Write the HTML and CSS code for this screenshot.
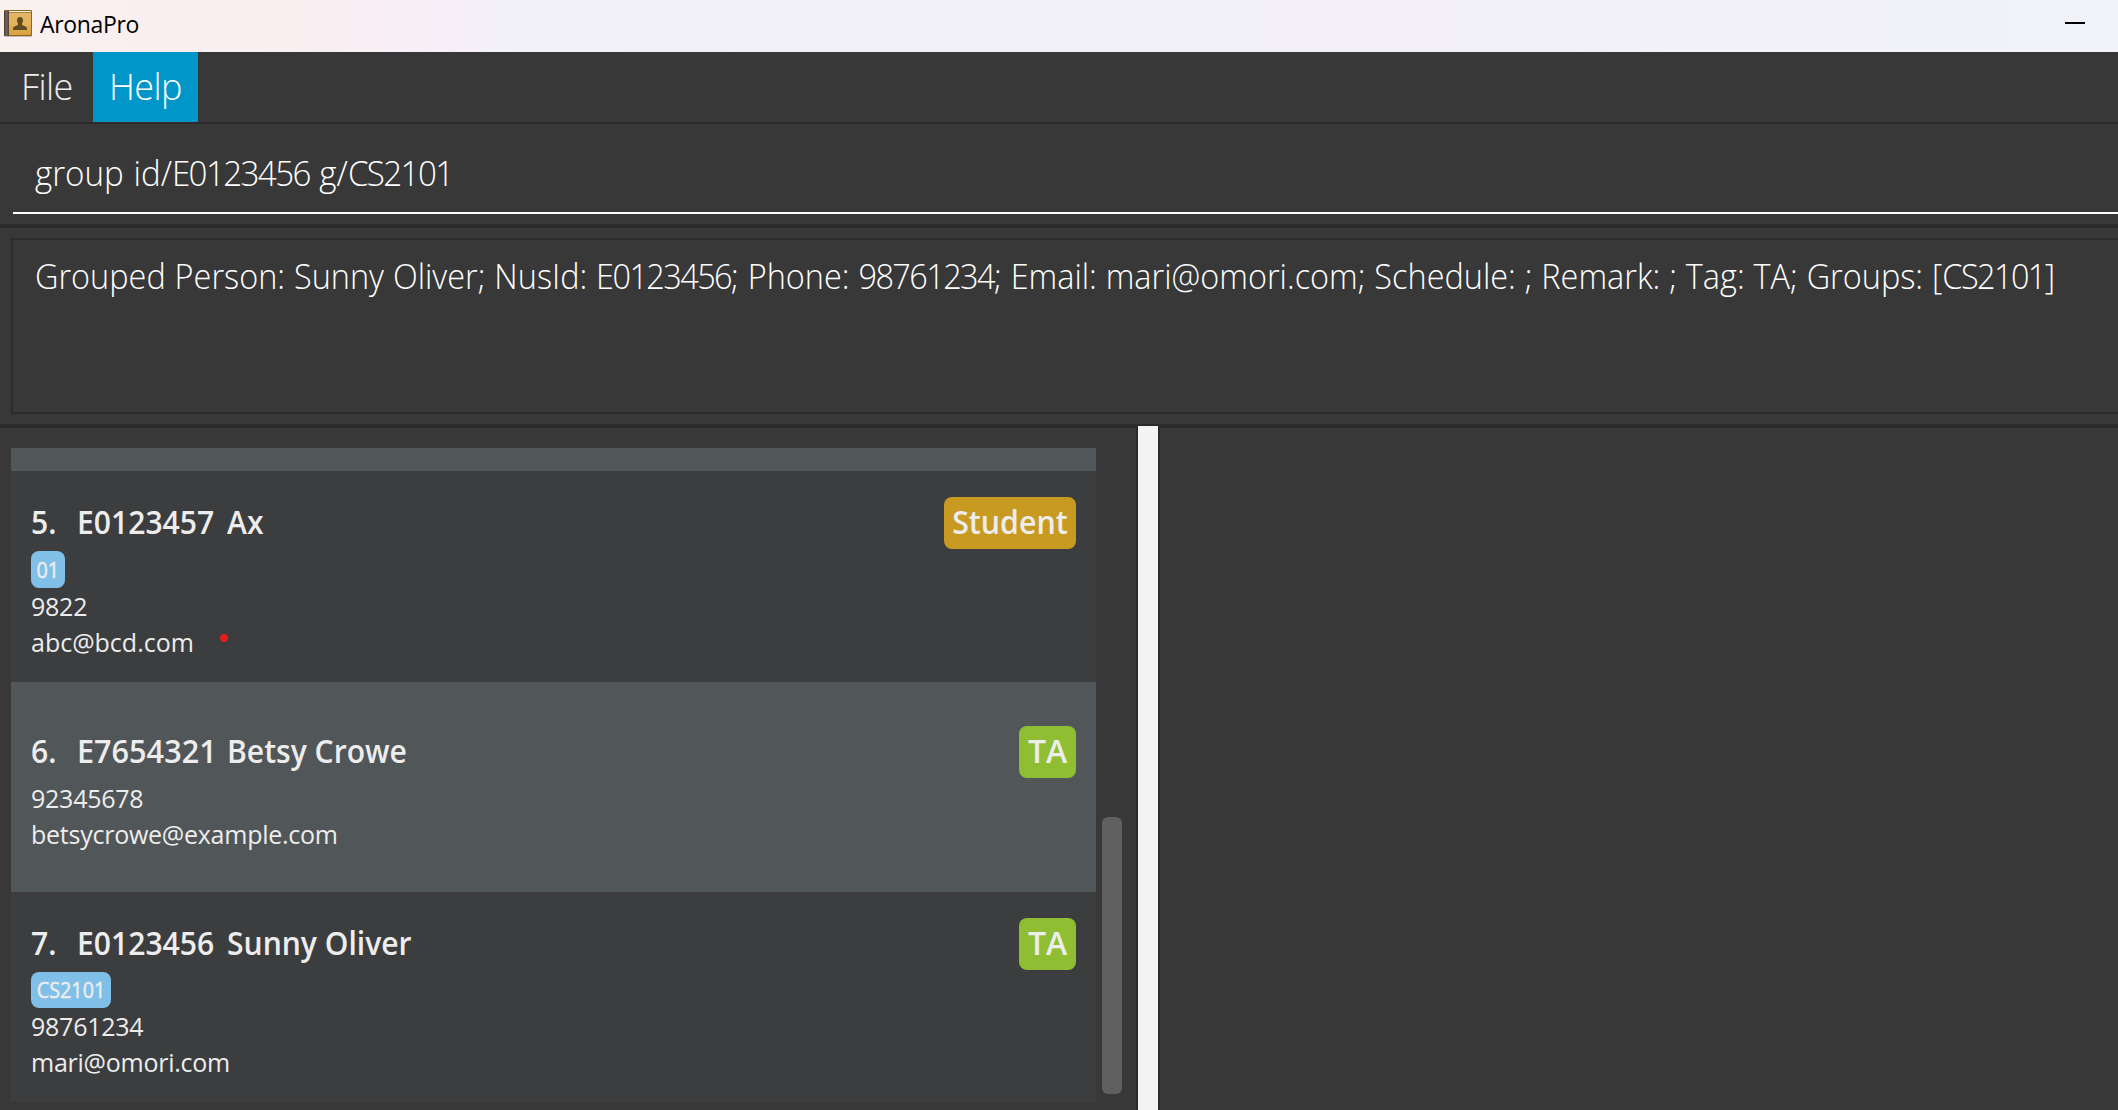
FILE: index.html
```html
<!DOCTYPE html>
<html lang="en">
<head>
<meta charset="utf-8">
<title>AronaPro</title>
<link rel="stylesheet" href="styles.css">
</head>
<body>
<div class="window">
  <header class="titlebar">
    <svg class="app-icon" width="30" height="30" viewBox="0 0 30 30">
      <defs>
        <linearGradient id="cover" x1="0" y1="0" x2="0" y2="1"><stop offset="0" stop-color="#e0b668"/><stop offset=".45" stop-color="#e3b45a"/><stop offset="1" stop-color="#d9a23d"/></linearGradient>
        <linearGradient id="spine" x1="0" y1="0" x2="1" y2="0"><stop offset="0" stop-color="#4a3a34"/><stop offset=".5" stop-color="#75645c"/><stop offset="1" stop-color="#51403a"/></linearGradient>
      </defs>
      <rect x="1.5" y="26" width="27.5" height="2" rx="1" fill="#000" opacity=".22"/>
      <rect x="1" y="1" width="28" height="26" rx="1" fill="#8e6420"/>
      <rect x="5" y="2" width="23" height="1.2" fill="#fff3d8"/>
      <rect x="6" y="4" width="22" height="22" fill="url(#cover)"/>
      <rect x="1" y="2" width="5" height="25" fill="url(#spine)"/>
      <path d="M17 8c2.100 0 3 1.400 3 3.200 0 1.500-.4 2.600-1 3.400v1.400c1.500.8 5 1.400 5 3.300v1.700H10v-1.700c0-1.900 3.500-2.500 5-3.300v-1.400c-.6-.8-1-1.900-1-3.400C14 9.400 14.900 8 17 8z" fill="#634b24"/>
    </svg>
    <span class="app-name">AronaPro</span>
    <span class="minimize"></span>
  </header>
  <nav class="menubar">
    <span class="menu menu-file">File</span>
    <span class="menu menu-help">Help</span>
  </nav>
  <section class="command">
    <div class="command-field"><span class="command-text">group id/<span class="code">E0123456</span> g/<span class="code">CS2101</span></span></div>
  </section>
  <section class="result">
    <div class="result-box"><span class="result-text">Grouped Person: Sunny Oliver; NusId: <span class="code">E0123456</span>; Phone: <span class="code">98761234</span>; Email: mari@omori.com; Schedule: ; Remark: ; Tag: TA; Groups: [<span class="code">CS2101</span>]</span></div>
  </section>
  <main class="content">
    <section class="list-pane">
      <div class="list">
        <div class="row-peek"></div>
        <article class="person first">
          <div class="head"><span class="index">5.</span><span class="nus-id">E0123457</span><span class="name">Ax</span><span class="role student"><span class="role-text">Student</span></span></div>
          <div class="groups"><span class="group group-short"><span class="group-text">01</span></span></div>
          <div class="line">9822</div>
          <div class="line mail">abc@bcd.com<span class="dot"></span></div>
        </article>
        <article class="person alt">
          <div class="head"><span class="index">6.</span><span class="nus-id descending">E7654321</span><span class="name">Betsy Crowe</span><span class="role ta">TA</span></div>
          <div class="line">92345678</div>
          <div class="line">betsycrowe@example.com</div>
        </article>
        <article class="person">
          <div class="head"><span class="index">7.</span><span class="nus-id">E0123456</span><span class="name">Sunny Oliver</span><span class="role ta">TA</span></div>
          <div class="groups"><span class="group"><span class="group-text">CS2101</span></span></div>
          <div class="line">98761234</div>
          <div class="line">mari@omori.com</div>
        </article>
      </div>
      <div class="scrollbar"><div class="thumb"></div></div>
    </section>
    <div class="divider"></div>
    <section class="detail-pane"></section>
  </main>
</div>
</body>
</html>
```
FILE: styles.css
```css
* { box-sizing: border-box; }
body { margin: 0; font-family: "Open Sans", "Noto Sans", sans-serif; background: #383838; color: #ededed; }
.window { display: flex; flex-direction: column; width: 100vw; height: 100vh; overflow: hidden; white-space: nowrap; }

.titlebar { flex: none; height: 52px; display: flex; align-items: center; padding: 0 33px 0 3px; color: #000;
  background: linear-gradient(90deg, #f9f0f0 0, #f9eff1 300px, #f8eef7 430px, #f3f1f8 510px, #f2f0f6 1400px, #f1f3f9 2118px); }
.app-icon { flex: none; margin-top: -4px; }
.app-name { margin: -5px 0 0 7px; font-size: 23px; line-height: 32px; letter-spacing: -.34px; }
.minimize { width: 20px; height: 2px; margin: -6px 0 0 auto; background: #000; }

.menubar { flex: none; height: 72px; display: flex; border-bottom: 2px solid #2b2b2b; }
.menu { font-size: 36px; font-weight: 300; line-height: 70px; letter-spacing: -.6px; }
.menu-file { width: 93px; padding-left: 21px; }
.menu-help { width: 105px; padding-left: 16px; background: #0096c9; color: #fff; }

.command { flex: none; height: 104px; padding: 0 0 10px 13px; border-bottom: 4px solid #2b2b2b; color: #fff; }
.command-field { height: 90px; padding-left: 22px; border-bottom: 2px solid #fff; font-size: 35px; font-weight: 300; line-height: 98px; }
.command-text { display: inline-block; word-spacing: 1px; transform: scaleX(.947); transform-origin: left; }
.code { letter-spacing: -1.700px; }

.result { flex: none; height: 200px; padding: 10px 0 10px 11px; border-bottom: 4px solid #2b2b2b; color: #fff; }
.result-box { height: 176px; padding-left: 22px; border: solid #2b2b2b; border-width: 2px 0 2px 2px; font-size: 35px; font-weight: 300; line-height: 72px; }
.result-text { display: inline-block; word-spacing: .5px; transform: scaleX(.927); transform-origin: left; }

.content { flex: 1; min-height: 0; display: flex; }
.list-pane { flex: none; width: 1136px; display: flex; padding: 20px 0 8px 11px; }
.list { width: 1085px; height: 654px; }
.row-peek { height: 23px; background: #515658; }
.person { height: 210px; padding: 26px 20px 0; background: #3c3d3f; }
.first { height: 211px; }
.alt { padding-top: 44px; background: #515658; }
.head { display: flex; height: 52px; font-size: 32px; font-weight: 600; line-height: 50px; }
.alt .head { margin-bottom: 2px; }
.index, .nus-id, .name { transform: scaleX(.94); transform-origin: left; }
.index { width: 46px; }
.nus-id { width: 150px; }
.descending { transform: scaleX(.957); }
.role { display: flex; justify-content: center; margin-left: auto; height: 52px; border-radius: 8px; }
.role-text { transform: scaleX(.948); }
.student { width: 132px; background: #c99a22; }
.ta { width: 57px; background: #8fbe32; }
.groups { display: flex; height: 38px; padding-top: 2px; }
.first .groups { height: 39px; }
.group { display: flex; justify-content: center; width: 80px; height: 36px; border-radius: 8px; background: #7fbfe8; font-size: 22.5px; line-height: 36px; -webkit-text-stroke: .5px #ededed; }
.group-short { width: 34px; height: 37px; line-height: 37px; }
.group-text { transform: scaleX(.88); }
.line { height: 36px; font-size: 25px; line-height: 36px; letter-spacing: -.25px; }
.mail { letter-spacing: 0; }
.dot { display: inline-block; width: 8px; height: 8px; margin: 0 0 10px 26px; border-radius: 50%; background: #e51c1c; }

.scrollbar { width: 26px; margin-left: 6px; padding-top: 369px; }
.thumb { width: 20px; height: 277px; border-radius: 6px; background: #606060; }
.divider { flex: none; width: 24px; margin-top: -2px; background: #f4f4f4; border: solid #2b2b2b; border-width: 0 2px; }
.detail-pane { flex: 1; }
```
